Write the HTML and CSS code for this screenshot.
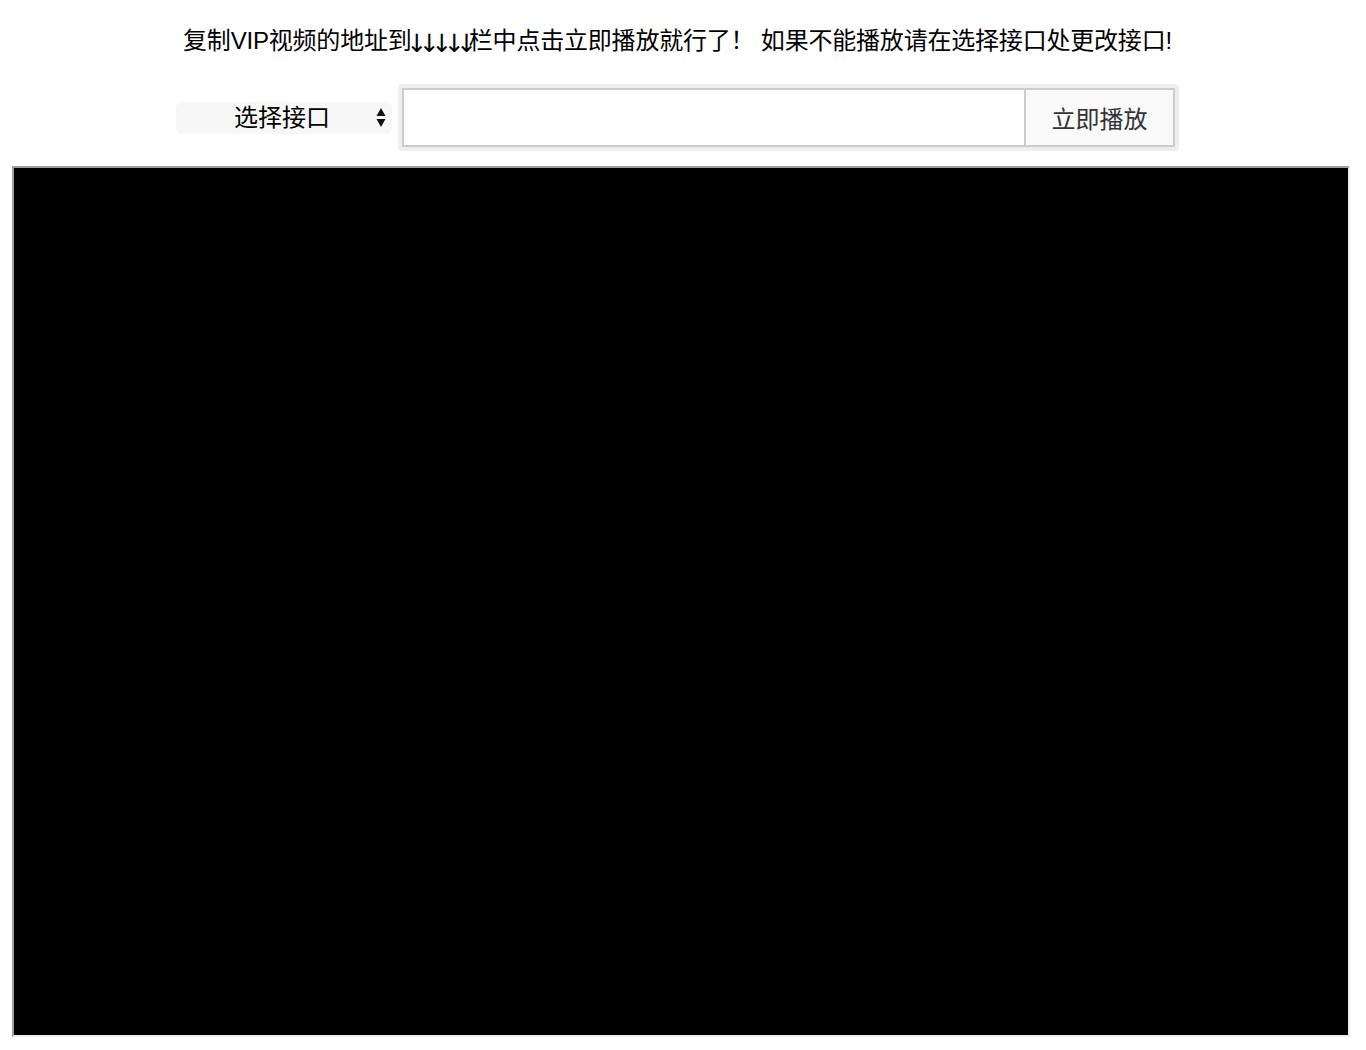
FILE: index.html
```html
<!DOCTYPE html>
<html lang="zh-CN">
<head>
<meta charset="utf-8">
<title>VIP视频解析</title>
<link rel="stylesheet" href="styles.css">
</head>
<body>
<div class="top">
  <p class="tip">复制VIP视频的地址到<span class="arrows">↓↓↓↓↓</span>栏中点击立即播放就行了！ 如果不能播放请在选择接口处更改接口!</p>
  <div class="toolbar">
    <div class="picker">
      <span class="picker-label">选择接口</span>
      <svg class="picker-arrows" width="10" height="21" viewBox="0 0 10 21" aria-hidden="true">
        <polygon points="5,1 9.5,9 0.5,9" fill="#111"/>
        <polygon points="0.5,12 9.5,12 5,20" fill="#111"/>
      </svg>
    </div>
    <div class="url-box">
      <input class="url-input" type="text">
      <button class="play-btn" type="button">立即播放</button>
    </div>
  </div>
</div>
<div class="player"></div>
</body>
</html>
```

FILE: styles.css
```css
html, body {
  margin: 0;
  padding: 0;
  background: #fff;
}

body {
  font-family: "Liberation Sans", "Noto Sans CJK SC", sans-serif;
  color: #000;
}

.top {
  width: 1003px;
  margin-left: 176px;
}

.tip {
  margin: 0;
  padding-top: 24px;
  font-size: 24px;
  line-height: 34px;
  text-align: center;
  white-space: nowrap;
  letter-spacing: -0.2px;
}

.arrows {
  font-family: "DejaVu Sans", sans-serif;
  font-size: 25px;
  letter-spacing: -8.5px;
  margin-left: -5px;
  position: relative;
  top: 3px;
}

.toolbar {
  margin-top: 26px;
  display: flex;
  align-items: center;
  gap: 6px;
}

.picker {
  width: 216px;
  height: 32px;
  flex: none;
  display: flex;
  align-items: center;
  background: #f7f7f7;
  border-radius: 6px;
  box-sizing: border-box;
  padding-left: 58px;
  padding-right: 6px;
}

.picker-label {
  font-size: 24px;
  line-height: 32px;
  color: #000;
}

.picker-arrows {
  margin-left: auto;
  display: block;
}

.url-box {
  flex: 1;
  display: flex;
  padding: 4px;
  background: #eeeeee;
  border-radius: 4px;
}

.url-input {
  flex: 1;
  height: 59px;
  box-sizing: border-box;
  margin: 0;
  border: 2px solid #cccccc;
  border-right: none;
  background: #fff;
  outline: none;
  padding: 0 10px;
  font-size: 20px;
  font-family: inherit;
}

.play-btn {
  width: 151px;
  height: 59px;
  box-sizing: border-box;
  margin: 0;
  border: 2px solid #cccccc;
  background: #f9f9f9;
  color: #333;
  font-size: 24px;
  font-family: inherit;
  padding: 0;
  cursor: pointer;
}

.player {
  margin-top: 15px;
  margin-left: 12px;
  width: 1338px;
  height: 871px;
  box-sizing: border-box;
  background: #000;
  border-width: 2px;
  border-style: solid;
  border-color: #9d9d9d #eeeeee #eeeeee #9d9d9d;
}
```
